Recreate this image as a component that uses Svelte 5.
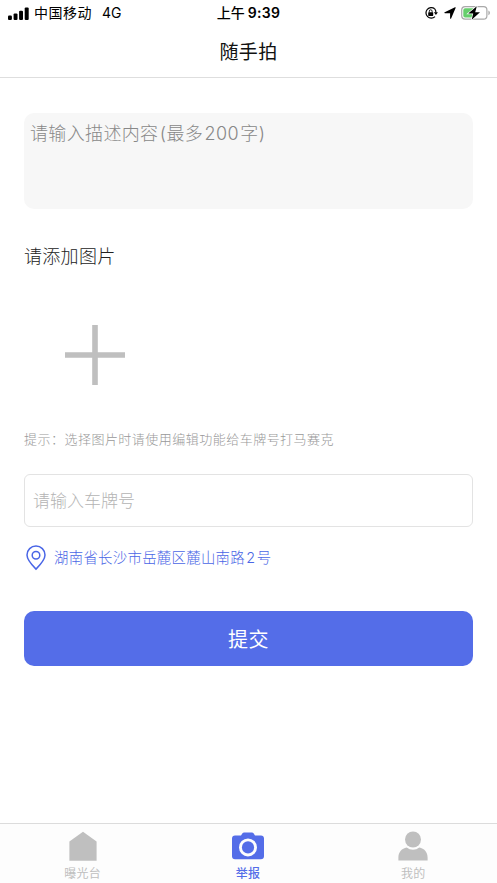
<!--
  Snapshot report page

  Form with a description, a picture picker, a plate number,
  the current address and a bottom tab bar.
-->
<script lang="ts">
  type Tab = { id: string; label: string };

  const tabs: Tab[] = [
    { id: 'board', label: '曝光台' },
    { id: 'report', label: '举报' },
    { id: 'mine', label: '我的' }
  ];

  let active = $state('report');
  let description = $state('');
  let plate = $state('');
</script>

<div class="page">
  <div class="status-bar">
    <div class="carrier">
      <svg class="signal" viewBox="0 0 21 13" fill="currentColor">
        <rect x="0" y="8.6" width="3.9" height="4.4" rx="1.1" />
        <rect x="5.6" y="6.5" width="3.9" height="6.5" rx="1.1" />
        <rect x="11.1" y="3.7" width="3.9" height="9.3" rx="1.1" />
        <rect x="16.7" y="0.4" width="4" height="12.6" rx="1.1" />
      </svg>
      <span class="operator">中国移动</span>
      <span class="network">4G</span>
    </div>
    <div class="clock"><span>上午</span><b>9:39</b></div>
    <div class="indicators">
      <svg class="lock" viewBox="0 0 14 14" fill="none" stroke="currentColor">
        <path d="M10.7 2.8A5.3 5.3 0 1 0 11 10.6" stroke-width="1.2" />
        <path d="M10.7 2.8A5.3 5.3 0 0 1 11.9 6.6" stroke-width="1.2" />
        <path d="M9.9 6.3h4l-2 2.7z" fill="currentColor" stroke="none" />
        <rect x="4.2" y="6.2" width="5" height="3.7" rx="0.6" fill="currentColor" stroke="none" />
        <path d="M5.3 6.5V5.2a1.4 1.4 0 0 1 2.8 0v1.3" stroke-width="0.9" />
      </svg>
      <svg class="arrow" viewBox="0 0 12 12" fill="currentColor">
        <path d="M11.7 0.8L7.1 11.4c-.3.6-1 .5-1-.2V6.2H.9c-.7 0-.8-.8-.2-1L11 .2c.5-.2.9.1.7.6z" />
      </svg>
      <svg class="battery" viewBox="0 0 30 14">
        <rect x="0.7" y="0.7" width="25.2" height="12.4" rx="3.4" fill="none" stroke="#a9a9a9" stroke-width="1.2" />
        <path d="M27.4 4.6c2 .8 2 3.8 0 4.6z" fill="#a9a9a9" />
        <rect x="2.3" y="2.3" width="11.2" height="9.2" rx="1.8" fill="#66ce6c" />
        <path d="M15.8 0.3L7.2 7.6h5L10.7 13.7l8.3-7.5h-4.8z" fill="#000" stroke="#fff" stroke-width="1.4" paint-order="stroke" />
      </svg>
    </div>
  </div>

  <header class="nav-bar">
    <h1>随手拍</h1>
  </header>

  <main>
    <textarea bind:value={description} maxlength="200" placeholder="请输入描述内容 (最多 200 字)"></textarea>

    <h2>请添加图片</h2>

    <button class="add-picture" aria-label="添加图片">
      <svg viewBox="0 0 60 60" fill="none" stroke="#bfbfbf" stroke-width="5.6">
        <path d="M30 0v60M0 30h60" />
      </svg>
    </button>

    <p class="tip">提示：选择图片时请使用编辑功能给车牌号打马赛克</p>

    <input class="plate" bind:value={plate} placeholder="请输入车牌号" />

    <div class="location">
      <svg viewBox="0 0 20 26" fill="none" stroke="currentColor" stroke-width="1.5">
        <path d="M10 24.1C6.4 20.5 1 15 1 10a9 9 0 0 1 18 0c0 5-5.4 10.5-9 14.1z" />
        <circle cx="10" cy="10.2" r="3.8" />
      </svg>
      <span>湖南省长沙市岳麓区麓山南路 2 号</span>
    </div>

    <button class="submit">提交</button>
  </main>

  <nav class="tab-bar">
    {#each tabs as tab (tab.id)}
      <button class="tab" class:active={active === tab.id} onclick={() => (active = tab.id)}>
        <svg viewBox="0 0 34 32" fill="currentColor">
          {#if tab.id === 'board'}
            <path d="M17 1.8l13.6 9.7v19.3H3.4V11.5z" />
          {:else if tab.id === 'report'}
            <path
              fill-rule="evenodd"
              d="M4 5.6h6l1.3-2.1c.4-.7 1-1.1 1.8-1.1h7.8c.8 0 1.4.4 1.8 1.1L24 5.6h6c1.8 0 3 1.2 3 3v17.7c0 1.8-1.2 3-3 3H4c-1.8 0-3-1.2-3-3V8.6c0-1.8 1.2-3 3-3zM17 8.4a9 9 0 1 0 0 18 9 9 0 0 0 0-18z"
            />
            <circle cx="17" cy="17.4" r="6.1" />
          {:else}
            <path d="M2.4 30.6v-3.2c0-5.2 3.5-9.1 8.3-9.9a10.1 10.1 0 0 0 12.6 0c4.8.8 8.3 4.7 8.3 9.9v3.2z" />
            <circle cx="17" cy="9.5" r="8" />
          {/if}
        </svg>
        <span>{tab.label}</span>
      </button>
    {/each}
  </nav>
</div>

<style>
  :global(body) {
    background: #fff;
  }

  .page {
    display: flex;
    flex-direction: column;
    height: 100vh;
    overflow: hidden;
    background: #fff;
    font-family: Inter, 'Noto Sans CJK SC', sans-serif;
    color: #333;
  }

  button,
  input,
  textarea {
    box-sizing: border-box;
    margin: 0;
    border: none;
    outline: none;
    font-family: inherit;
  }

  button {
    padding: 0;
    background: none;
  }

  svg {
    display: block;
    flex: none;
  }

  /* Status bar */
  .status-bar {
    display: grid;
    grid-template-columns: 1fr auto 1fr;
    align-items: center;
    height: 26px;
    padding: 0 6px 0 8px;
    font-size: 14px;
    line-height: 26px;
    color: #000;
  }

  .carrier,
  .clock,
  .indicators {
    display: flex;
    align-items: center;
  }

  .signal {
    width: 21px;
    height: 13px;
  }

  .operator {
    margin-left: 5px;
    letter-spacing: 0.5px;
  }

  .network {
    margin-left: 10px;
  }

  .clock {
    gap: 3px;
    margin-right: 2px;
    font-weight: 500;
  }

  .clock b {
    font-weight: 600;
    letter-spacing: 0.3px;
  }

  .indicators {
    justify-content: flex-end;
  }

  .lock {
    width: 14px;
    height: 14px;
  }

  .arrow {
    width: 12px;
    height: 12px;
    margin: 0 5px 0 6px;
  }

  .battery {
    width: 30px;
    height: 14px;
  }

  .nav-bar {
    display: flex;
    align-items: center;
    justify-content: center;
    box-sizing: border-box;
    height: 52px;
    padding-bottom: 2px;
    border-bottom: 1px solid #dedede;
  }

  .nav-bar h1 {
    margin: 0;
    font-size: 19px;
    font-weight: 400;
    letter-spacing: 0.3px;
    color: #111;
  }

  main {
    display: flex;
    flex: 1;
    flex-direction: column;
    padding: 35px 24px 0;
    font-weight: 300;
  }

  textarea {
    width: 100%;
    height: 96px;
    padding: 7px 6px;
    border-radius: 10px;
    background: #f7f7f7;
    font-size: 18px;
    font-weight: 300;
    line-height: 28px;
    letter-spacing: 0.35px;
    word-spacing: -4px;
    resize: none;
  }

  textarea::placeholder {
    color: #888;
  }

  h2 {
    margin: 34px 0 0;
    font-size: 18px;
    font-weight: 300;
    line-height: 28px;
    letter-spacing: 0.3px;
    color: #222;
  }

  .add-picture {
    display: flex;
    align-items: center;
    justify-content: center;
    width: 142px;
    height: 142px;
    margin-top: 13px;
  }

  .add-picture svg {
    width: 60px;
    height: 60px;
  }

  .tip {
    margin: 3px 0 0;
    font-size: 13px;
    line-height: 20px;
    letter-spacing: 0.48px;
    color: #999;
  }

  .plate {
    width: 100%;
    height: 53px;
    margin-top: 25px;
    padding: 0 8px;
    border: 1px solid #e3e3e3;
    border-radius: 6px;
    font-size: 17px;
    font-weight: 300;
  }

  .plate::placeholder {
    color: #b4b4b4;
  }

  .location {
    display: flex;
    align-items: center;
    height: 26px;
    margin-top: 18px;
    padding-left: 2px;
    font-size: 14.4px;
    letter-spacing: 0.3px;
    word-spacing: -3px;
    color: #4a66e6;
  }

  .location svg {
    width: 20px;
    height: 26px;
    margin-right: 8px;
  }

  .location span {
    padding-bottom: 4px;
  }

  .submit {
    width: 100%;
    height: 55px;
    margin-top: 40px;
    border-radius: 10px;
    background: #546de8;
    font-size: 20px;
    font-weight: 400;
    letter-spacing: 0.4px;
    color: #fff;
  }

  /* Bottom tabs */
  .tab-bar {
    display: flex;
    height: 59px;
    padding-right: 1px;
    border-top: 1px solid #dcdcdc;
    background: #fdfdfd;
  }

  .tab {
    display: flex;
    flex: 1;
    flex-direction: column;
    align-items: center;
    padding-top: 6px;
    font-size: 12px;
    line-height: 18px;
    letter-spacing: 0.2px;
    color: #bfbfbf;
  }

  .tab svg {
    width: 34px;
    height: 32px;
    margin-bottom: 3px;
  }

  .tab.active {
    color: #546de8;
  }

  .tab.active span {
    font-weight: 500;
  }
</style>
